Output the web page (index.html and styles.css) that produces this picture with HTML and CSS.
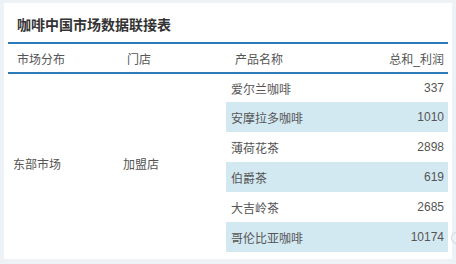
FILE: index.html
```html
<!DOCTYPE html>
<html lang="zh">
<head>
<meta charset="utf-8">
<title>咖啡中国市场数据联接表</title>
<link rel="stylesheet" href="styles.css">
</head>
<body>
<div class="card">
  <div class="title">咖啡中国市场数据联接表</div>
  <table class="grid">
    <colgroup>
      <col class="c1"><col class="c2"><col class="c3"><col class="c4">
    </colgroup>
    <thead>
      <tr><th>市场分布</th><th>门店</th><th>产品名称</th><th class="num">总和_利润</th></tr>
    </thead>
    <tbody>
      <tr class="first"><td rowspan="6">东部市场</td><td rowspan="6">加盟店</td><td>爱尔兰咖啡</td><td class="num">337</td></tr>
      <tr class="alt"><td>安摩拉多咖啡</td><td class="num">1010</td></tr>
      <tr><td>薄荷花茶</td><td class="num">2898</td></tr>
      <tr class="alt"><td>伯爵茶</td><td class="num">619</td></tr>
      <tr><td>大吉岭茶</td><td class="num">2685</td></tr>
      <tr class="alt"><td>哥伦比亚咖啡</td><td class="num">10174</td></tr>
    </tbody>
  </table>
</div>
<div class="handle"></div>
</body>
</html>
```
FILE: styles.css
```css
html, body {
  margin: 0;
  padding: 0;
}
body {
  position: relative;
  width: 456px;
  height: 264px;
  overflow: hidden;
  background: #edf2f6;
  font-family: "Liberation Sans", "Noto Sans CJK SC", sans-serif;
  font-size: 12px;
  color: #555;
}
.card {
  margin: 3px 0 0 4px;
  width: 448px;
  height: 256px;
  box-sizing: border-box;
  padding: 0 4px;
  background: #fff;
}
.title {
  height: 39px;
  line-height: 44px;
  padding-left: 9px;
  font-size: 14px;
  font-weight: bold;
  color: #333;
  box-sizing: border-box;
}
.grid {
  width: 440px;
  table-layout: fixed;
  border-collapse: separate;
  border-spacing: 0;
}
.c1 { width: 110px; }
.c2 { width: 108px; }
.c3 { width: 120px; }
.c4 { width: 102px; }
.grid th {
  height: 28px;
  padding: 0 0 0 9px;
  border-top: 2px solid #2b7bb9;
  border-bottom: 2px solid #2b7bb9;
  font-weight: normal;
  text-align: left;
  color: #555;
  box-sizing: content-box;
}
.grid th.num {
  text-align: right;
  padding: 0 4px 0 0;
}
.grid td {
  height: 30px;
  padding: 0 0 0 5px;
  vertical-align: middle;
}
.grid tr.first td {
  height: 28px;
}
.grid td.num {
  text-align: right;
  padding: 0 4px 0 0;
}
.grid tr.alt td {
  background: #d3e9f1;
}
.handle {
  position: absolute;
  left: 451px;
  top: 232px;
  width: 10px;
  height: 10px;
  border: 1px solid #cfd6dc;
  border-radius: 50%;
}
```
